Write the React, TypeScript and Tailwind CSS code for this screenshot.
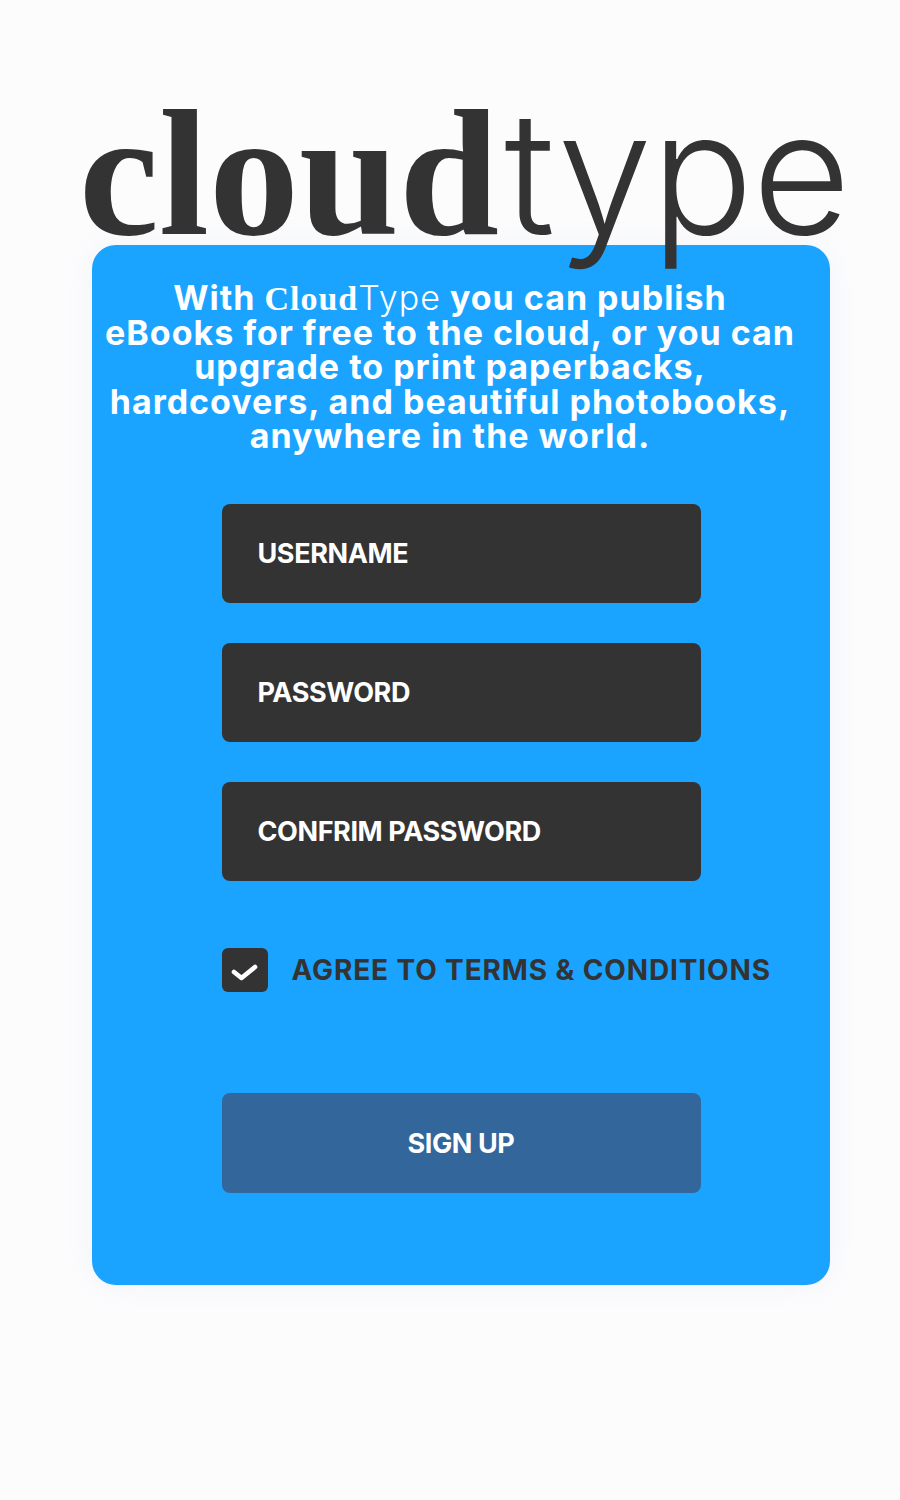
import React from "react";

function Field({ label }: { label: string }) {
  return (
    <div className="flex h-[99px] w-[479px] items-center rounded-[8px] bg-[#333333] pt-[2px] pl-[36px] font-['Inter','Liberation_Sans',sans-serif] text-[27px] font-bold tracking-[-0.4px] text-white">
      {label}
    </div>
  );
}

export default function App() {
  return (
    <div className="flex min-h-[1500px] flex-col bg-[#fcfcfd]">
      <div className="relative z-10 mt-[62px] flex h-[183px] items-baseline pl-[79px] whitespace-nowrap text-[#333333]">
        <span className="font-['Liberation_Serif',serif] text-[180px] leading-[220px] font-bold">cloud</span>
        <span className="ml-[5px] font-['Inter',sans-serif] text-[170px] leading-[220px] font-[350] tracking-[-1px]">type</span>
      </div>
      <div className="ml-[92px] flex h-[1040px] w-[738px] flex-col items-center rounded-[24px] bg-[#1aa3ff] shadow-[0_0_30px_rgba(200,210,235,0.2)]">
        <p className="mt-[36px] w-[716px] self-start text-center font-['Inter','Liberation_Sans',sans-serif] text-[34px] leading-[34.2px] font-bold tracking-[1px] text-white">
          With <span className="font-['Liberation_Serif',serif] font-bold">Cloud</span><span className="font-light">Type</span> you can publish<br />
          eBooks for free to the cloud, or you can<br />
          upgrade to print paperbacks,<br />
          hardcovers, and beautiful photobooks,<br />
          anywhere in the world.
        </p>
        <div className="mt-[51px] flex flex-col gap-[40px]">
          <Field label="USERNAME" />
          <Field label="PASSWORD" />
          <Field label="CONFRIM PASSWORD" />
        </div>
        <div className="mt-[67px] flex w-[479px] items-center gap-[24px] whitespace-nowrap">
          <div className="flex h-[44px] w-[46px] shrink-0 items-center justify-center rounded-[6px] bg-[#333333]">
            <svg width="28" height="20" viewBox="0 0 28 20" fill="none" className="mt-[4px]">
              <path d="M3 10 L10.5 16 L24 5" stroke="white" strokeWidth="4.6" strokeLinecap="round" strokeLinejoin="round" />
            </svg>
          </div>
          <span className="font-['Inter','Liberation_Sans',sans-serif] text-[28px] font-bold tracking-[0.87px] text-[#333333]">AGREE TO TERMS &amp; CONDITIONS</span>
        </div>
        <div className="mt-[101px] flex h-[100px] w-[479px] items-center justify-center rounded-[8px] bg-[#33669a] pt-[2px] font-['Inter','Liberation_Sans',sans-serif] text-[27px] font-bold tracking-[-0.4px] text-white">
          SIGN UP
        </div>
      </div>
    </div>
  );
}
